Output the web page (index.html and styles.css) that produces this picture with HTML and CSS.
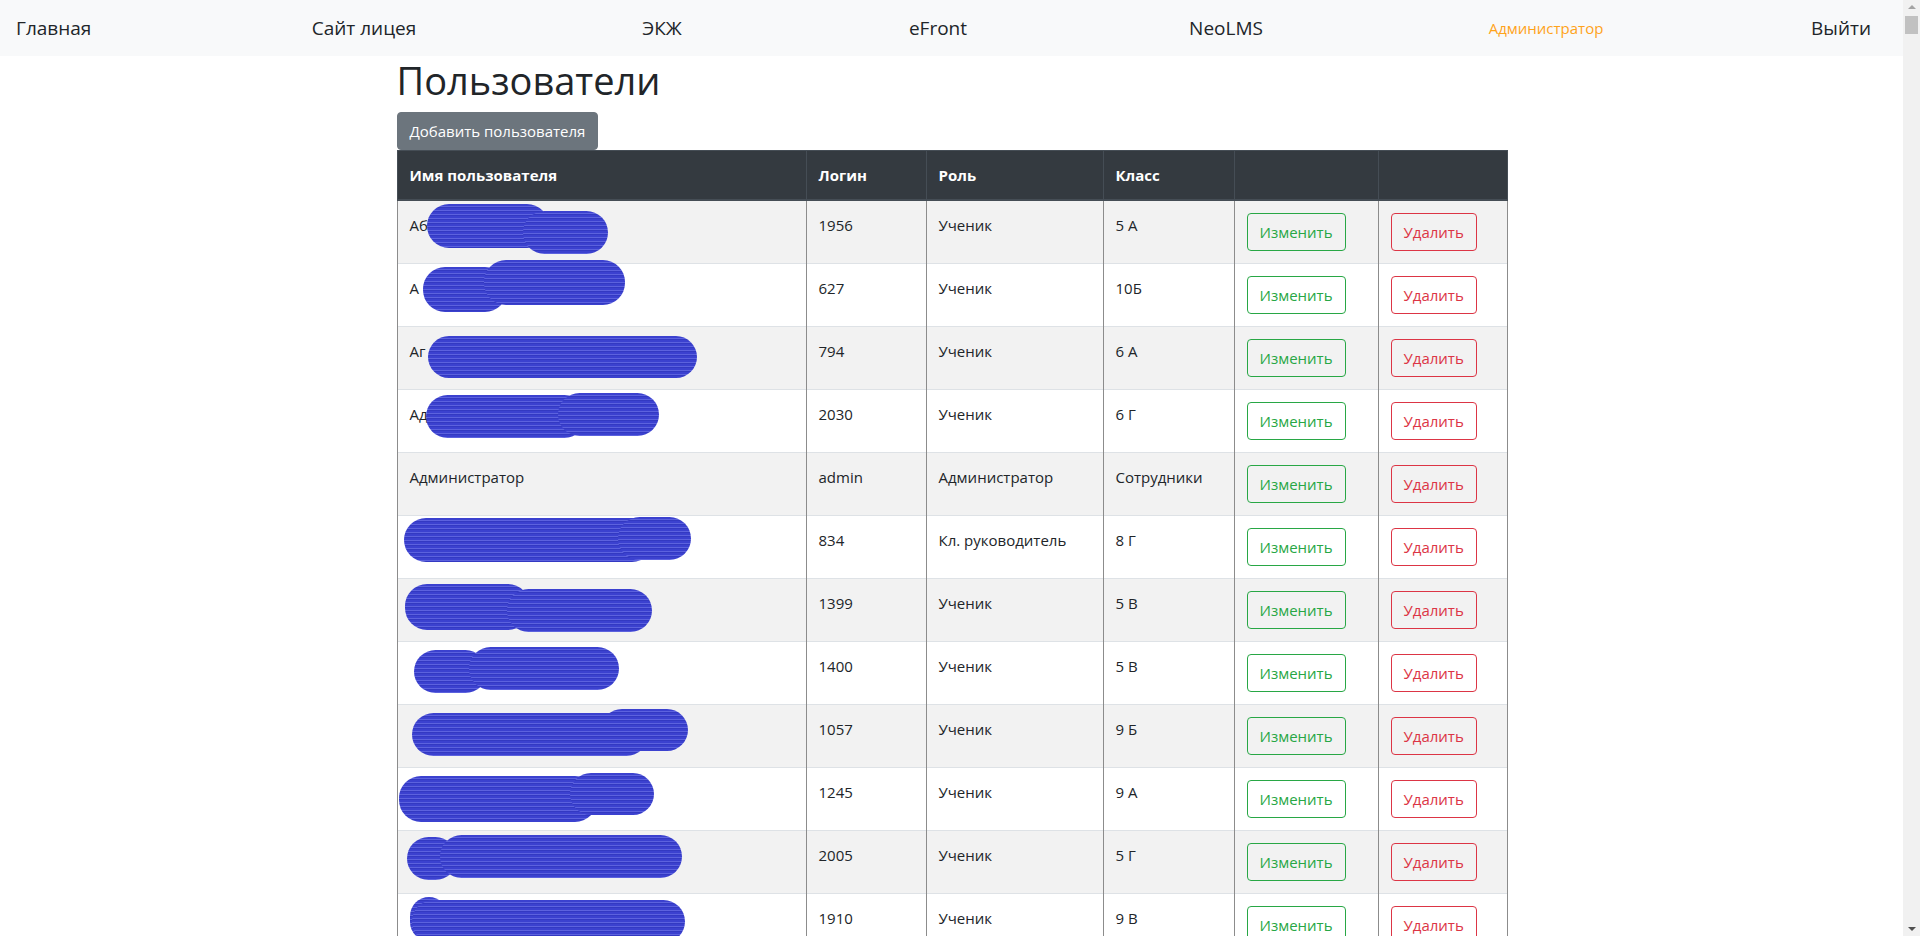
FILE: index.html
```html
<!DOCTYPE html>
<html lang="ru">
<head>
<meta charset="utf-8">
<title>Пользователи</title>
<link rel="stylesheet" href="styles.css">
</head>
<body>
<div class="page">
  <div class="main">
    <nav class="navbar">
      <a class="nav-link nav-home">Главная</a>
      <a class="nav-link nav-site">Сайт лицея</a>
      <a class="nav-link nav-ekzh">ЭКЖ</a>
      <a class="nav-link nav-efront">eFront</a>
      <a class="nav-link nav-neo">NeoLMS</a>
      <a class="nav-link nav-admin nav-active">Администратор</a>
      <a class="nav-link nav-exit">Выйти</a>
    </nav>
    <div class="container">
      <h1 class="title">Пользователи</h1>
      <button class="btn btn-secondary">Добавить пользователя</button>
      <table class="users">
        <colgroup>
          <col class="c-name"><col class="c-login"><col class="c-role"><col class="c-class"><col class="c-edit"><col class="c-del">
        </colgroup>
        <thead>
          <tr><th>Имя пользователя</th><th>Логин</th><th>Роль</th><th>Класс</th><th></th><th></th></tr>
        </thead>
        <tbody>
          <tr><td class="name">Аб<span class="scr" style="left:29px;top:3px;width:122px;height:44px"></span><span class="scr" style="left:125px;top:10px;width:85px;height:43px"></span></td><td>1956</td><td>Ученик</td><td>5 А</td><td><button class="btn btn-edit">Изменить</button></td><td><button class="btn btn-del">Удалить</button></td></tr>
          <tr><td class="name">А<span class="scr" style="left:25px;top:3px;width:84px;height:45px"></span><span class="scr" style="left:86px;top:-4px;width:141px;height:45px"></span></td><td>627</td><td>Ученик</td><td>10Б</td><td><button class="btn btn-edit">Изменить</button></td><td><button class="btn btn-del">Удалить</button></td></tr>
          <tr><td class="name">Аг<span class="scr" style="left:30px;top:9px;width:269px;height:42px"></span></td><td>794</td><td>Ученик</td><td>6 А</td><td><button class="btn btn-edit">Изменить</button></td><td><button class="btn btn-del">Удалить</button></td></tr>
          <tr><td class="name">Ад<span class="scr" style="left:28px;top:5px;width:160px;height:43px"></span><span class="scr" style="left:160px;top:3px;width:101px;height:43px"></span></td><td>2030</td><td>Ученик</td><td>6 Г</td><td><button class="btn btn-edit">Изменить</button></td><td><button class="btn btn-del">Удалить</button></td></tr>
          <tr><td class="name">Администратор</td><td>admin</td><td>Администратор</td><td>Сотрудники</td><td><button class="btn btn-edit">Изменить</button></td><td><button class="btn btn-del">Удалить</button></td></tr>
          <tr><td class="name"><span class="scr" style="left:6px;top:2px;width:250px;height:44px"></span><span class="scr" style="left:220px;top:1px;width:73px;height:43px"></span></td><td>834</td><td>Кл. руководитель</td><td>8 Г</td><td><button class="btn btn-edit">Изменить</button></td><td><button class="btn btn-del">Удалить</button></td></tr>
          <tr><td class="name"><span class="scr" style="left:7px;top:5px;width:125px;height:46px"></span><span class="scr" style="left:109px;top:10px;width:145px;height:43px"></span></td><td>1399</td><td>Ученик</td><td>5 В</td><td><button class="btn btn-edit">Изменить</button></td><td><button class="btn btn-del">Удалить</button></td></tr>
          <tr><td class="name"><span class="scr" style="left:16px;top:8px;width:73px;height:43px"></span><span class="scr" style="left:71px;top:5px;width:150px;height:43px"></span></td><td>1400</td><td>Ученик</td><td>5 В</td><td><button class="btn btn-edit">Изменить</button></td><td><button class="btn btn-del">Удалить</button></td></tr>
          <tr><td class="name"><span class="scr" style="left:14px;top:8px;width:236px;height:43px"></span><span class="scr" style="left:203px;top:4px;width:87px;height:42px"></span></td><td>1057</td><td>Ученик</td><td>9 Б</td><td><button class="btn btn-edit">Изменить</button></td><td><button class="btn btn-del">Удалить</button></td></tr>
          <tr><td class="name"><span class="scr" style="left:1px;top:8px;width:198px;height:46px"></span><span class="scr" style="left:172px;top:5px;width:84px;height:42px"></span></td><td>1245</td><td>Ученик</td><td>9 А</td><td><button class="btn btn-edit">Изменить</button></td><td><button class="btn btn-del">Удалить</button></td></tr>
          <tr><td class="name"><span class="scr" style="left:9px;top:6px;width:50px;height:43px"></span><span class="scr" style="left:42px;top:4px;width:242px;height:43px"></span></td><td>2005</td><td>Ученик</td><td>5 Г</td><td><button class="btn btn-edit">Изменить</button></td><td><button class="btn btn-del">Удалить</button></td></tr>
          <tr><td class="name"><span class="scr" style="left:12px;top:3px;width:38px;height:44px"></span><span class="scr" style="left:14px;top:6px;width:273px;height:43px"></span></td><td>1910</td><td>Ученик</td><td>9 В</td><td><button class="btn btn-edit">Изменить</button></td><td><button class="btn btn-del">Удалить</button></td></tr>
        </tbody>
      </table>
    </div>
  </div>
  <div class="scrollbar">
    <div class="sb-arrow sb-up"></div>
    <div class="sb-thumb"></div>
    <div class="sb-track"></div>
    <div class="sb-arrow sb-down"></div>
  </div>
</div>
</body>
</html>
```

FILE: styles.css
```css
html, body {
  margin: 0;
  padding: 0;
  height: 936px;
  overflow: hidden;
}
body {
  font-family: "Open Sans", "Noto Sans", sans-serif;
  font-size: 15px;
  line-height: 24px;
  color: #212529;
  background: #fff;
}
.page {
  display: flex;
  height: 936px;
}
.main {
  flex: 1;
  min-width: 0;
  overflow: hidden;
}
.navbar {
  height: 56px;
  background: #f8f9fa;
  display: flex;
  align-items: center;
  padding: 0 0 0 16px;
  box-sizing: border-box;
}
.nav-link {
  flex: none;
  width: 130px;
  text-align: center;
  white-space: nowrap;
  font-size: 19px;
  color: #212529;
  text-decoration: none;
  line-height: 24px;
}
.nav-home { width: 72px; text-align: left; }
.nav-site { margin-left: 211px; }
.nav-ekzh { margin-left: 168px; }
.nav-efront { margin-left: 146px; }
.nav-neo { margin-left: 158px; }
.nav-admin { margin-left: 190px; }
.nav-exit { margin-left: 170px; width: 120px; }
.nav-active {
  font-size: 15px;
  color: #ffa31a;
}
.container {
  width: 1110px;
  margin: 0 auto;
}
.title {
  margin: 0 0 8px;
  font-size: 38px;
  line-height: 48px;
  font-weight: 500;
}
.btn {
  display: inline-block;
  font-family: inherit;
  font-size: 15px;
  line-height: 24px;
  padding: 6px 12px;
  border: 1px solid transparent;
  border-radius: 4px;
  background: transparent;
  cursor: pointer;
  vertical-align: top;
}
.btn-secondary {
  background: #6c757d;
  border-color: #6c757d;
  color: #fff;
}
.btn-edit {
  color: #28a745;
  border-color: #28a745;
}
.btn-del {
  color: #dc3545;
  border-color: #dc3545;
}
.users {
  width: 1110px;
  border-collapse: collapse;
  table-layout: fixed;
}
.c-name { width: 409px; }
.c-login { width: 120px; }
.c-role { width: 177px; }
.c-class { width: 131px; }
.c-edit { width: 144px; }
.c-del { width: 129px; }
.users th, .users td {
  padding: 12px;
  text-align: left;
  vertical-align: top;
  white-space: nowrap;
}
.users th {
  background: #343a40;
  color: #fff;
  font-weight: 700;
  border: 1px solid #454d55;
  border-bottom: 2px solid #454d55;
}
.users td {
  border-top: 1px solid #dee2e6;
  border-left: 1px solid #8c8c8c;
  border-right: 1px solid #8c8c8c;
}
.users tbody tr:nth-child(odd) td {
  background: #f2f2f2;
}
.users td.name {
  position: relative;
}
.scr {
  position: absolute;
  border-radius: 22px;
  background: repeating-linear-gradient(180deg, #3b41cf 0 2px, #5c62de 2px 3px, #3339c2 3px 4px);
  z-index: 2;
}
.scrollbar {
  width: 17px;
  flex: none;
  background: #f1f1f1;
  display: flex;
  flex-direction: column;
  align-items: center;
}
.sb-arrow {
  width: 0;
  height: 0;
  border-left: 4px solid transparent;
  border-right: 4px solid transparent;
}
.sb-up {
  margin-top: 5px;
  border-bottom: 4px solid #a3a3a3;
}
.sb-thumb {
  width: 13px;
  height: 18px;
  margin-top: 7px;
  background: #c1c1c1;
}
.sb-track {
  flex: 1;
}
.sb-down {
  margin-bottom: 5px;
  border-top: 4px solid #505050;
}
```
